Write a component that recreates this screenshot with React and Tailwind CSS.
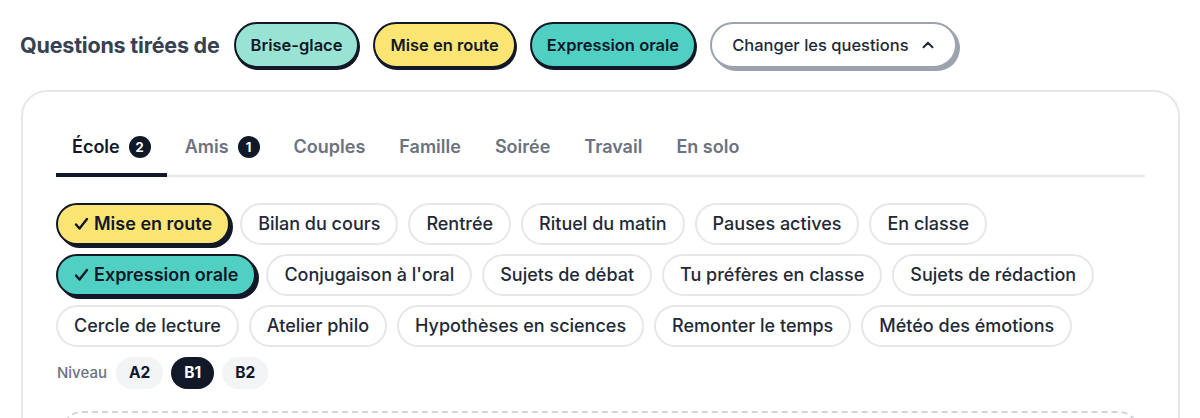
import React from "react";

const sources = [
  { label: "Brise-glace", cls: "bg-[#99e3d4]" },
  { label: "Mise en route", cls: "bg-[#fde574]" },
  { label: "Expression orale", cls: "bg-[#4fd0c3]" },
];

const tabs = [
  { label: "École", count: 2, active: true },
  { label: "Amis", count: 1 },
  { label: "Couples" },
  { label: "Famille" },
  { label: "Soirée" },
  { label: "Travail" },
  { label: "En solo" },
];

const topics = [
  [
    { label: "Mise en route", sel: "bg-[#fde574]" },
    { label: "Bilan du cours" },
    { label: "Rentrée" },
    { label: "Rituel du matin" },
    { label: "Pauses actives" },
    { label: "En classe" },
  ],
  [
    { label: "Expression orale", sel: "bg-[#4fd0c3]" },
    { label: "Conjugaison à l'oral" },
    { label: "Sujets de débat" },
    { label: "Tu préfères en classe" },
    { label: "Sujets de rédaction" },
  ],
  [
    { label: "Cercle de lecture" },
    { label: "Atelier philo" },
    { label: "Hypothèses en sciences" },
    { label: "Remonter le temps" },
    { label: "Météo des émotions" },
  ],
];

function Chevron() {
  return (
    <svg width="18" height="18" viewBox="0 0 24 24" fill="none" stroke="currentColor" strokeWidth="2.6" strokeLinecap="round" strokeLinejoin="round">
      <path d="M6 15l6-6 6 6" />
    </svg>
  );
}

function Check() {
  return (
    <svg width="15" height="14" viewBox="0 0 15 14" fill="none" stroke="currentColor" strokeWidth="2.4" strokeLinecap="round" strokeLinejoin="round">
      <path d="M2 7.5l3.5 4L13 2" />
    </svg>
  );
}

export default function App() {
  return (
    <div className="h-[418px] w-[1200px] overflow-hidden bg-white font-['Inter','Liberation_Sans',sans-serif] text-[#1f2937]">
      {/* ── header: sources ── */}
      <div className="flex items-center gap-[14px] pl-5 pt-[22px]">
        <h2 className="text-[21.5px] font-bold tracking-[-0.2px] text-[#374151]">Questions tirées de</h2>
        {sources.map(function (s) {
          return (
            <span key={s.label}
              className={"rounded-full border-2 border-[#111827] px-[15px] py-[9px] text-[16.5px] font-semibold leading-6 text-[#111827] shadow-[1px_2px_0_#111827] " + s.cls}>
              {s.label}
            </span>
          );
        })}
        <button className="flex items-center gap-[10px] rounded-full border-2 border-[#9ca3af] bg-white py-[9px] pl-5 pr-[18px] text-[16.5px] font-medium leading-6 text-[#1f2937] shadow-[3px_3px_0_#9ca3af]">
          Changer les questions <Chevron />
        </button>
      </div>

      {/* ── card ── */}
      <div className="ml-[21px] mr-5 mt-[22px] rounded-[26px] border-2 border-[#e5e7eb] px-[33px] pt-[43px]">
        <div className="flex gap-[2px] border-b-2 border-[#e5e7eb]">
          {tabs.map(function (t) {
            return (
              <div key={t.label}
                className={"-mb-[2px] flex items-center gap-[9px] border-b-[4px] px-4 pb-[14px] text-[18px] font-semibold leading-6 " + (t.active ? "border-[#111827] text-[#111827]" : "border-transparent text-[#6b7280]")}>
                {t.label}
                {t.count ? (
                  <span className="flex h-[22px] w-[22px] items-center justify-center rounded-full bg-[#111827] text-[13px] font-bold text-white">{t.count}</span>
                ) : null}
              </div>
            );
          })}
        </div>

        <div className="mt-[26px] flex flex-col gap-[9px]">
          {topics.map(function (row, i) {
            return (
              <div key={i} className="flex gap-[10px]">
                {row.map(function (c) {
                  return c.sel ? (
                    <span key={c.label}
                      className={"flex items-center gap-[5px] rounded-full border-2 border-[#111827] px-[16px] py-[7px] text-[18px] font-semibold leading-6 text-[#111827] shadow-[3px_3px_0_#111827] " + c.sel}>
                      <Check /> {c.label}
                    </span>
                  ) : (
                    <span key={c.label}
                      className="rounded-full border-2 border-[#e5e7eb] bg-white px-[16px] py-[7px] text-[18px] font-medium leading-6 text-[#1f2937]">
                      {c.label}
                    </span>
                  );
                })}
              </div>
            );
          })}
        </div>

        <div className="mt-[10px] flex items-center gap-2">
          <span className="ml-px mr-[1px] text-[15px] font-medium text-[#6b7280]">Niveau</span>
          <span className="rounded-full bg-[#f3f4f6] px-[13px] py-[5px] text-[15.5px] font-bold leading-[22px] text-[#111827]">A2</span>
          <span className="rounded-full bg-[#111827] px-[13px] py-[5px] text-[15.5px] font-bold leading-[22px] text-white">B1</span>
          <span className="rounded-full bg-[#f3f4f6] px-[13px] py-[5px] text-[15.5px] font-bold leading-[22px] text-[#111827]">B2</span>
        </div>

        <div className="mx-[6px] mt-[22px] h-20 rounded-t-[20px] border-2 border-dashed border-[#d1d5db]" />
      </div>
    </div>
  );
}
